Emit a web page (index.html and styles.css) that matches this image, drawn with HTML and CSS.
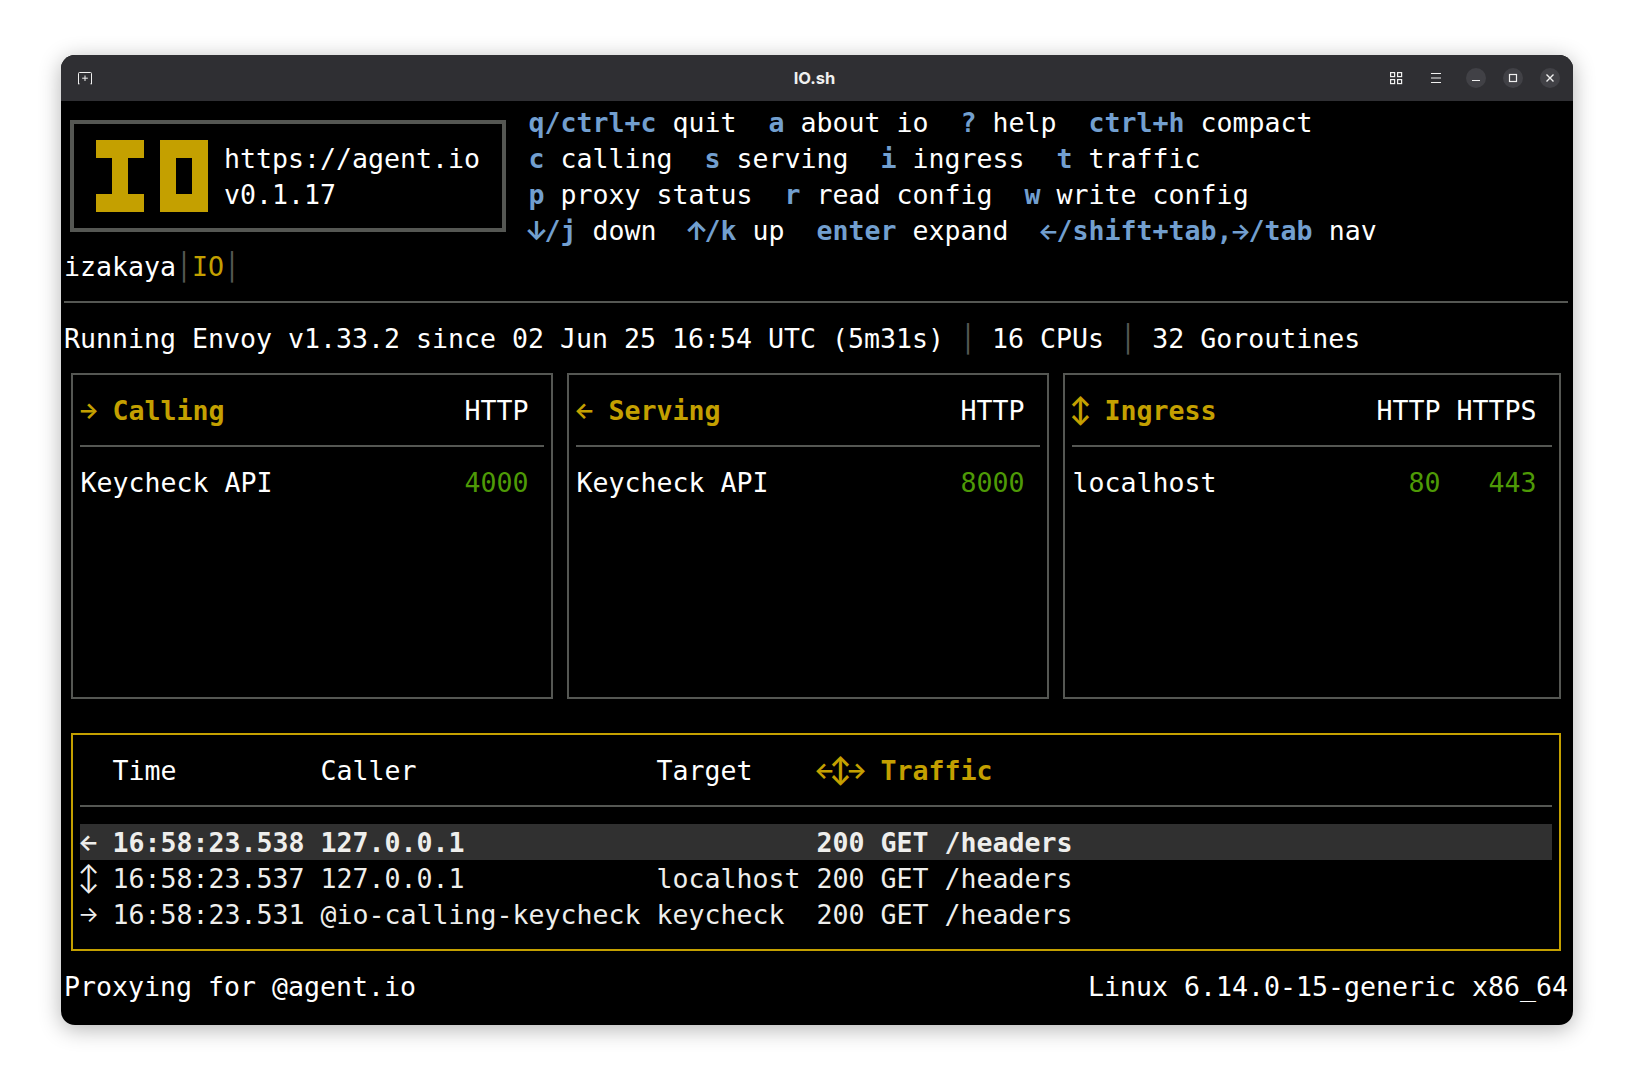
FILE: index.html
```html
<!DOCTYPE html>
<html lang="en">
<head>
    <meta charset="UTF-8">
    <title>IO.sh</title>
    <link rel="stylesheet" href="styles.css">
</head>
<body>
    <div class="window">
        <div class="titlebar">
            <div class="titlebar-left">
                <svg class="icon" width="16" height="16" viewBox="0 0 16 16">
                    <path d="M1.500 14V3.500Q1.500 2.500 2.500 2.500H13.500Q14.500 2.500 14.500 3.500V14M8 5.500V11M5.200 8.200H10.800M1 13.800H2.500M13.500 13.800H15" fill="none" stroke="#f0f0f0" stroke-width="1"/>
                </svg>
            </div>
            <div class="title">IO.sh</div>
            <div class="titlebar-right">
                <svg class="icon" width="20" height="20" viewBox="0 0 20 20">
                    <g fill="none" stroke="#f0f0f0" stroke-width="1.200">
                        <rect x="4.600" y="4.600" width="4" height="4"/>
                        <rect x="11.600" y="4.600" width="4" height="4"/>
                        <rect x="4.600" y="11.600" width="4" height="4"/>
                        <rect x="11.600" y="11.600" width="4" height="4"/>
                    </g>
                </svg>
                <svg class="icon" width="20" height="20" viewBox="0 0 20 20">
                    <path d="M5 5.500H15M5 10H15M5 14.500H15" fill="none" stroke="#f0f0f0" stroke-width="1"/>
                </svg>
                <div class="window-buttons">
                    <button class="wbtn"><svg width="20" height="20" viewBox="0 0 20 20"><path d="M6 12.500H14" stroke="#f0f0f0" stroke-width="1.200"/></svg></button>
                    <button class="wbtn"><svg width="20" height="20" viewBox="0 0 20 20"><rect x="6.500" y="6.500" width="7" height="7" fill="none" stroke="#f0f0f0" stroke-width="1.200"/></svg></button>
                    <button class="wbtn"><svg width="20" height="20" viewBox="0 0 20 20"><path d="M6.500 6.500L13.500 13.500M13.500 6.500L6.500 13.500" stroke="#f0f0f0" stroke-width="1.400"/></svg></button>
                </div>
            </div>
        </div>

        <div class="terminal">
            <!-- logo and keys -->
            <div class="top">
                <div class="logo">
                    <svg class="logo-mark" width="112" height="72" viewBox="0 0 112 72">
                        <path d="M0 0H48V18H32V54H48V72H0V54H16V18H0Z" fill="#c4a000"/>
                        <path d="M64 0H112V72H64ZM80 18V54H96V18Z" fill="#c4a000" fill-rule="evenodd"/>
                    </svg>
                    <div class="logo-text">
                        <div class="line">https://agent.io</div>
                        <div class="line">v0.1.17</div>
                    </div>
                </div>
                <div class="keys">
                    <div class="line"><b>q/ctrl+c</b> quit  <b>a</b> about io  <b>?</b> help  <b>ctrl+h</b> compact</div>
                    <div class="line"><b>c</b> calling  <b>s</b> serving  <b>i</b> ingress  <b>t</b> traffic</div>
                    <div class="line"><b>p</b> proxy status  <b>r</b> read config  <b>w</b> write config</div>
                    <div class="line"><b><span class="arrow tall">↓</span>/j</b> down  <b><span class="arrow tall">↑</span>/k</b> up  <b>enter</b> expand  <b><span class="arrow">←</span>/shift+tab,<span class="arrow">→</span>/tab</b> nav</div>
                </div>
            </div>

            <div class="line">izakaya<span class="dim">│</span><span class="yellow">IO</span><span class="dim">│</span></div>
            <div class="rule"></div>
            <div class="line">Running Envoy v1.33.2 since 02 Jun 25 16:54 UTC (5m31s) <span class="dim">│</span> 16 CPUs <span class="dim">│</span> 32 Goroutines</div>

            <!-- listeners -->
            <div class="panels">
                <div class="panel">
                    <div class="pane-row one">
                        <span class="heading"><span class="arrow">→</span> Calling</span>
                        <span>HTTP</span>
                    </div>
                    <div class="divider"></div>
                    <div class="pane-row one">
                        <span>Keycheck API</span>
                        <span class="port">4000</span>
                    </div>
                </div>
                <div class="panel">
                    <div class="pane-row one">
                        <span class="heading"><span class="arrow">←</span> Serving</span>
                        <span>HTTP</span>
                    </div>
                    <div class="divider"></div>
                    <div class="pane-row one">
                        <span>Keycheck API</span>
                        <span class="port">8000</span>
                    </div>
                </div>
                <div class="panel">
                    <div class="pane-row two">
                        <span class="heading"><span class="arrow tall">↕</span> Ingress</span>
                        <span>HTTP</span>
                        <span>HTTPS</span>
                    </div>
                    <div class="divider"></div>
                    <div class="pane-row two">
                        <span>localhost</span>
                        <span class="port">80</span>
                        <span class="port">443</span>
                    </div>
                </div>
            </div>

            <!-- traffic table -->
            <div class="traffic">
                <div class="traffic-row head">
                    <span></span>
                    <span>Time</span>
                    <span>Caller</span>
                    <span>Target</span>
                    <span class="heading"><span class="arrow">←</span><span class="arrow tall">↕</span><span class="arrow">→</span> Traffic</span>
                </div>
                <div class="divider"></div>
                <div class="traffic-row selected">
                    <span><span class="arrow">←</span></span>
                    <span>16:58:23.538</span>
                    <span>127.0.0.1</span>
                    <span></span>
                    <span>200 GET /headers</span>
                </div>
                <div class="traffic-row">
                    <span><span class="arrow tall">↕</span></span>
                    <span>16:58:23.537</span>
                    <span>127.0.0.1</span>
                    <span>localhost</span>
                    <span>200 GET /headers</span>
                </div>
                <div class="traffic-row">
                    <span><span class="arrow">→</span></span>
                    <span>16:58:23.531</span>
                    <span>@io-calling-keycheck</span>
                    <span>keycheck</span>
                    <span>200 GET /headers</span>
                </div>
            </div>

            <div class="footer">
                <span>Proxying for @agent.io</span>
                <span>Linux 6.14.0-15-generic x86_64</span>
            </div>
        </div>
    </div>
</body>
</html>
```

FILE: styles.css
```css
* {
    box-sizing: border-box;
    margin: 0;
    padding: 0;
}

body {
    background: #fff;
    padding: 55px 61px;
}

.window {
    width: 1512px;
    height: 970px;
    background: #000;
    border-radius: 14px;
    overflow: hidden;
    box-shadow: 0 4px 22px rgba(0, 0, 0, 0.3);
}

/* title bar */
.titlebar {
    height: 46px;
    background: #2f2f33;
    display: flex;
    align-items: center;
    padding: 0 13px 0 16px;
}

.titlebar-left,
.titlebar-right {
    flex: 1;
    display: flex;
    align-items: center;
}

.titlebar-right {
    justify-content: flex-end;
    gap: 20px;
}

.icon {
    display: block;
}

.title {
    font-family: Inter, "Noto Sans", sans-serif;
    font-weight: 700;
    font-size: 16.500px;
    color: #f0f0f0;
    padding-right: 8px;
}

.window-buttons {
    display: flex;
    gap: 17px;
}

.wbtn {
    width: 20px;
    height: 20px;
    border: 0;
    border-radius: 50%;
    background: #414146;
    display: block;
}

.wbtn svg {
    display: block;
}

/* terminal, a grid of 16x36 cells */
.terminal {
    padding: 4px 5px 0 3px;
    font-family: "DejaVu Sans Mono", "Liberation Mono", monospace;
    font-size: 26.58px;
    line-height: 36px;
    color: #fff;
}

.line {
    height: 36px;
    white-space: pre;
}

.dim {
    color: #555753;
}

.yellow {
    color: #c4a000;
}

/* DejaVu's arrows are tiny, these are closer to the terminal font */
.arrow {
    display: inline-flex;
    justify-content: center;
    width: 16px;
    height: 36px;
    font-family: Inter, sans-serif;
    font-size: 22px;
    line-height: 36px;
    vertical-align: top;
}

.arrow.tall {
    font-size: 26px;
}

.top {
    display: flex;
}

.logo {
    width: 436px;
    height: 112px;
    margin: 15px 0 17px 5.500px;
    border: 4px solid #555753;
    display: flex;
    align-items: center;
    gap: 16.500px;
    padding-left: 22px;
}

.logo-text {
    line-height: 38px;
}

.logo-mark {
    display: block;
    flex: none;
}

.keys {
    margin-left: 23px;
}

.keys b {
    color: #729fcf;
}

.rule {
    height: 2px;
    margin: 16px 0 18px;
    background: #555753;
}

.panels {
    display: grid;
    grid-template-columns: 482px 482px 498px;
    gap: 14px;
    margin: 16px 0 0 6.500px;
}

.panel {
    height: 326px;
    border: 2px solid #555753;
    padding: 17px 7px 0;
}

.heading {
    color: #c4a000;
    font-weight: bold;
}

.port {
    color: #4e9a06;
    text-align: right;
}

.pane-row {
    display: grid;
    height: 36px;
    line-height: 38px;
    padding: 0 15px 0 1px;
}

.pane-row.one {
    grid-template-columns: 1fr auto;
}

.pane-row.two {
    grid-template-columns: 1fr 64px 80px;
    column-gap: 16px;
}

.divider {
    height: 2px;
    margin: 17px 0;
    background: #555753;
}

.traffic {
    width: 1490px;
    height: 218px;
    margin: 34px 0 0 6.500px;
    border: 2px solid #c4a000;
    padding: 17px 7px 0;
}

.traffic-row {
    display: grid;
    grid-template-columns: 32px 208px 336px 160px 1fr;
    height: 36px;
    line-height: 38px;
    padding-left: 1px;
    color: #eeeeec;
}

.traffic-row.head {
    color: #fff;
}

.traffic-row.selected {
    background: #303030;
    font-weight: bold;
}

.footer {
    display: flex;
    justify-content: space-between;
    margin-top: 18px;
}
```
